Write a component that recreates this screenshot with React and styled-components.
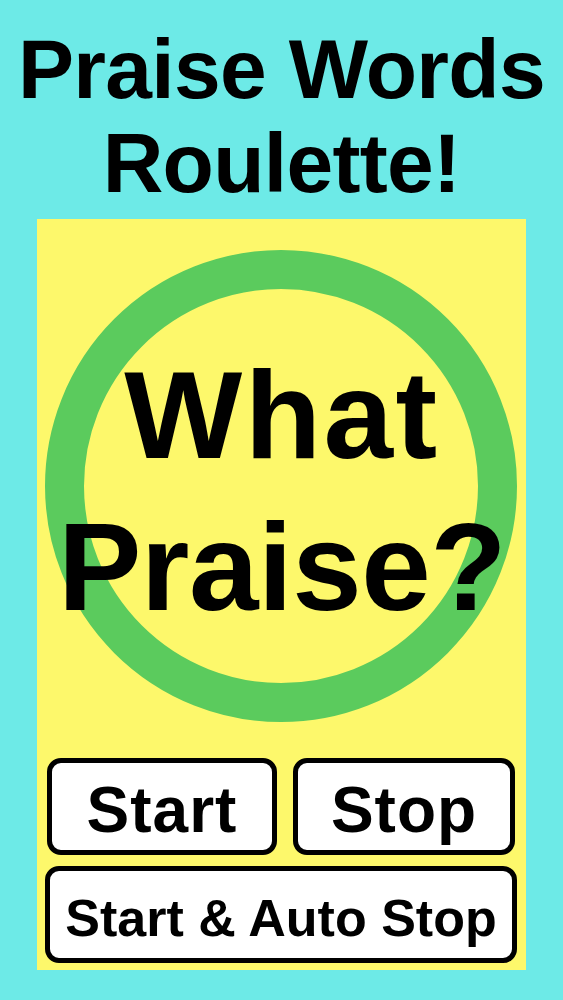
import React from "react";
import styled, { createGlobalStyle } from "styled-components";

const GlobalStyle = createGlobalStyle`
  html, body {
    margin: 0;
    padding: 0;
    background: #6deae7;
  }
  body {
    font-family: "Liberation Sans", Arial, Helvetica, sans-serif;
    color: #000;
  }
  * { box-sizing: border-box; }
`;

const Page = styled.div`
  width: 563px;
  min-height: 1000px;
  background: #6deae7;
  display: flex;
  flex-direction: column;
  align-items: center;
  padding-top: 22px;
`;

const Title = styled.h1`
  margin: 0;
  font-size: 84px;
  line-height: 94px;
  font-weight: 700;
  text-align: center;
  letter-spacing: -0.7px;
`;

const Panel = styled.section`
  margin-top: 9px;
  width: 489px;
  height: 751px;
  background: #fdf86b;
  display: flex;
  flex-direction: column;
  padding: 31px 9px 7px 8px;
`;

const Stage = styled.div`
  display: grid;
  justify-items: center;
  align-items: center;
  height: 472px;
`;

const Ring = styled.div`
  grid-area: 1 / 1;
  width: 472px;
  height: 472px;
  border-radius: 50%;
  border: 39px solid #5bcb5d;
`;

const Word = styled.div`
  grid-area: 1 / 1;
  z-index: 1;
  display: flex;
  flex-direction: column;
  align-items: center;
  margin-top: 10px;
  margin-left: 2px;
`;

const WordLine = styled.span`
  font-size: 125px;
  line-height: 152px;
  font-weight: 700;
  white-space: nowrap;
  letter-spacing: ${(p) => p.$spacing}px;
`;

const Controls = styled.div`
  margin-top: 36px;
  display: flex;
  flex-direction: column;
  gap: 11px;
`;

const Row = styled.div`
  display: grid;
  grid-template-columns: 230px 222px;
  column-gap: 16px;
  padding: 0 2px;
`;

const Button = styled.button`
  height: 97px;
  background: #fff;
  border: 5px solid #000;
  border-radius: 14px;
  font-family: "Liberation Sans", Arial, Helvetica, sans-serif;
  font-weight: 700;
  font-size: ${(p) => p.$size}px;
  color: #000;
  padding: 6px 0 0;
  display: flex;
  align-items: center;
  justify-content: center;
  white-space: nowrap;
  letter-spacing: ${(p) => p.$spacing || 0}px;
  cursor: pointer;
`;

export default function App() {
  return (
    <>
      <GlobalStyle />
      <Page>
        <Title>
          Praise Words
          <br />
          Roulette!
        </Title>
        <Panel>
          <Stage>
            <Ring />
            <Word>
              <WordLine $spacing={2.5}>What</WordLine>
              <WordLine $spacing={-0.5}>Praise?</WordLine>
            </Word>
          </Stage>
          <Controls>
            <Row>
              <Button $size={64} $spacing={1}>Start</Button>
              <Button $size={64} $spacing={1}>Stop</Button>
            </Row>
            <Button $size={52}>Start &amp; Auto Stop</Button>
          </Controls>
        </Panel>
      </Page>
    </>
  );
}
